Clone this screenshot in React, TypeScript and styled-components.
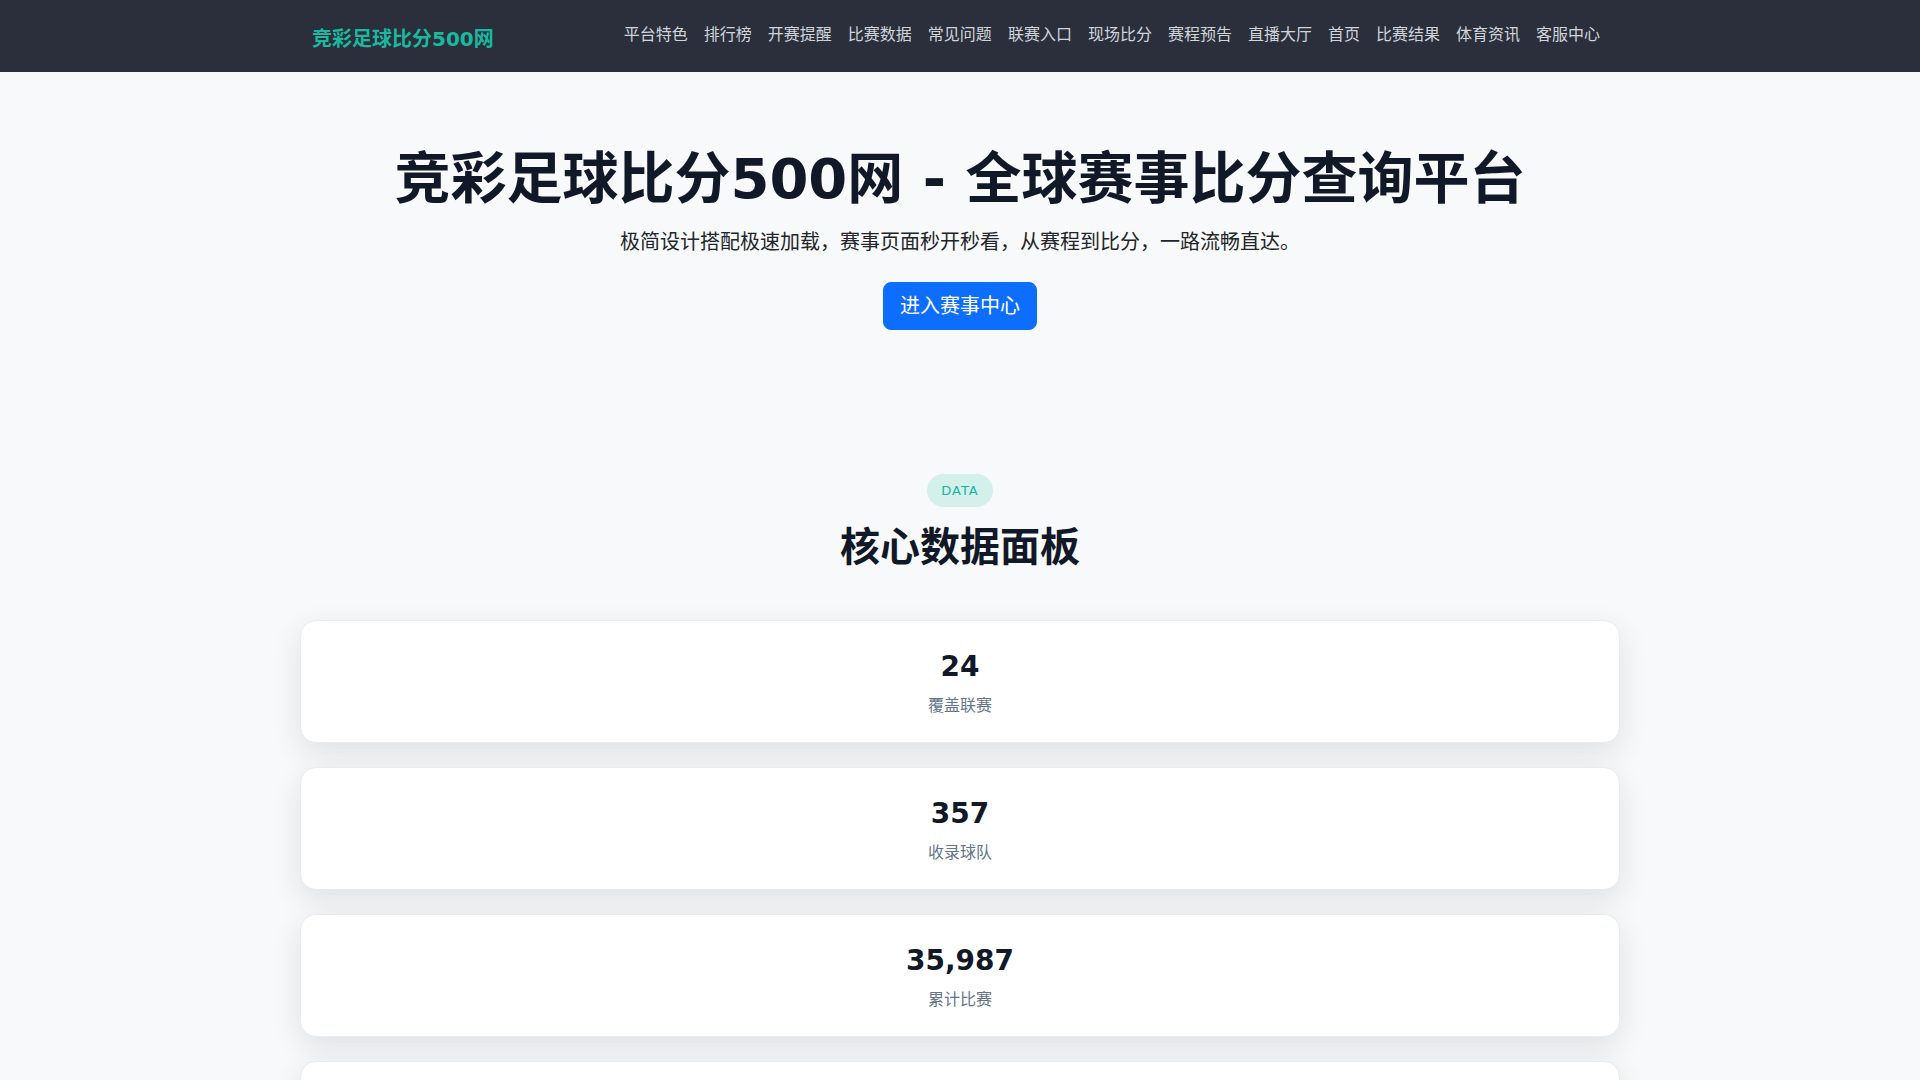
import styled, { createGlobalStyle } from "styled-components";

const navItems = [
  "平台特色",
  "排行榜",
  "开赛提醒",
  "比赛数据",
  "常见问题",
  "联赛入口",
  "现场比分",
  "赛程预告",
  "直播大厅",
  "首页",
  "比赛结果",
  "体育资讯",
  "客服中心",
];

const stats = [
  { value: "24", label: "覆盖联赛" },
  { value: "357", label: "收录球队" },
  { value: "35,987", label: "累计比赛" },
  { value: "99.9%", label: "数据准确率" },
];

const GlobalStyle = createGlobalStyle`
  * {
    box-sizing: border-box;
  }
  body {
    margin: 0;
    background: #f8f9fa;
    font-family: "DejaVu Sans", "Noto Sans CJK SC", sans-serif;
    color: #212529;
  }
`;

const Header = styled.header`
  height: 72px;
  background: #2b2e3b;
`;

const HeaderInner = styled.div`
  max-width: 1320px;
  height: 100%;
  margin: 0 auto;
  padding: 0 12px;
  display: flex;
  align-items: center;
  justify-content: space-between;
`;

const Logo = styled.div`
  font-size: 20px;
  font-weight: 700;
  color: #1ab99f;
  margin-top: 3px;
`;

const Nav = styled.nav`
  display: flex;
  align-items: center;
  margin-top: -2px;
`;

const NavLink = styled.a`
  padding: 0 8px;
  font-size: 16px;
  line-height: 24px;
  color: #d1d5db;
  text-decoration: none;
`;

const Hero = styled.section`
  padding: 73px 12px 72px;
  text-align: center;
`;

const Title = styled.h1`
  margin: 0 0 15px;
  font-size: 56px;
  line-height: 1.2;
  font-weight: 700;
  color: #111827;
`;

const Lead = styled.p`
  margin: 0 0 25px;
  font-size: 20px;
  line-height: 30px;
  color: #212529;
`;

const PrimaryButton = styled.a`
  display: inline-block;
  padding: 8px 16px;
  font-size: 20px;
  line-height: 30px;
  color: #fff;
  background: #0d6efd;
  border: 1px solid #0d6efd;
  border-radius: 8px;
  text-decoration: none;
`;

const Section = styled.section`
  padding: 72px 0 40px;
  display: flex;
  flex-direction: column;
  align-items: center;
`;

const Badge = styled.span`
  display: inline-block;
  padding: 7px 14px;
  font-size: 13px;
  line-height: 19px;
  letter-spacing: 1px;
  color: #16b5a0;
  background: #d3f0ea;
  border-radius: 999px;
`;

const SectionTitle = styled.h2`
  margin: 16px 0 49px;
  font-size: 40px;
  line-height: 48px;
  font-weight: 700;
  color: #111827;
`;

const CardList = styled.div`
  width: 1320px;
  display: flex;
  flex-direction: column;
  gap: 24px;
`;

const StatCard = styled.div`
  padding: 27px 24px 24px;
  background: #fff;
  border: 1px solid #e9ecef;
  border-radius: 16px;
  box-shadow: 0 10px 30px rgba(15, 23, 42, 0.11);
  text-align: center;
`;

const StatValue = styled.div`
  font-size: 28px;
  line-height: 38px;
  font-weight: 700;
  color: #111827;
`;

const StatLabel = styled.div`
  margin-top: 8px;
  font-size: 16px;
  line-height: 24px;
  color: #64748b;
`;

const App = () => {
  return (
    <>
      <GlobalStyle />
      <Header>
        <HeaderInner>
          <Logo>竞彩足球比分500网</Logo>
          <Nav>
            {navItems.map((item) => (
              <NavLink key={item} href="#">
                {item}
              </NavLink>
            ))}
          </Nav>
        </HeaderInner>
      </Header>

      <Hero>
        <Title>竞彩足球比分500网 - 全球赛事比分查询平台</Title>
        <Lead>极简设计搭配极速加载，赛事页面秒开秒看，从赛程到比分，一路流畅直达。</Lead>
        <PrimaryButton href="#">进入赛事中心</PrimaryButton>
      </Hero>

      <Section>
        <Badge>DATA</Badge>
        <SectionTitle>核心数据面板</SectionTitle>
        <CardList>
          {stats.map((s) => (
            <StatCard key={s.label}>
              <StatValue>{s.value}</StatValue>
              <StatLabel>{s.label}</StatLabel>
            </StatCard>
          ))}
        </CardList>
      </Section>
    </>
  );
};
export default App;
